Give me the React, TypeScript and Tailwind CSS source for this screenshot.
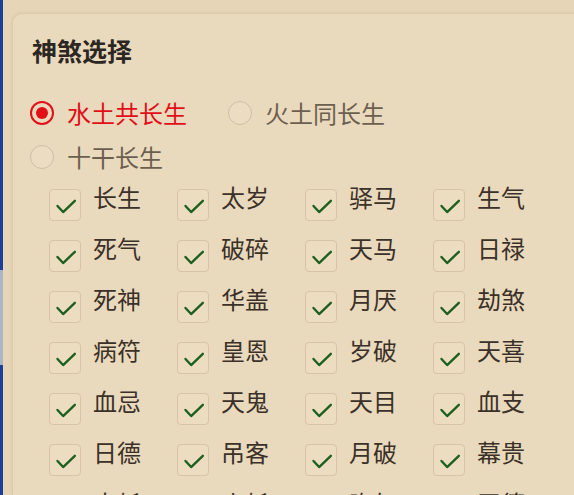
import React from "react";

const rows: string[][] = [
  ["长生", "太岁", "驿马", "生气"],
  ["死气", "破碎", "天马", "日禄"],
  ["死神", "华盖", "月厌", "劫煞"],
  ["病符", "皇恩", "岁破", "天喜"],
  ["血忌", "天鬼", "天目", "血支"],
  ["日德", "吊客", "月破", "幕贵"],
  ["大耗", "小耗", "晦气", "天德"],
];

function Check() {
  return (
    <div className="mt-[4px] flex h-[32px] w-[32px] shrink-0 items-center justify-center rounded-[4px] border border-[#d6c4a4] bg-[#ecdcc0]">
      <svg width="32" height="32" viewBox="0 0 32 32" fill="none">
        <path
          d="M8 17 L14 23.5 L26.5 11.5"
          stroke="#1c5f1f"
          strokeWidth="2.5"
          strokeLinecap="round"
          strokeLinejoin="round"
        />
      </svg>
    </div>
  );
}

function Radio({ label, checked }: { label: string; checked?: boolean }) {
  return (
    <div className="flex items-center">
      {checked ? (
        <div className="flex h-[24px] w-[24px] items-center justify-center rounded-full border-2 border-[#e10f19]">
          <div className="h-[12px] w-[12px] rounded-full bg-[#e10f19]" />
        </div>
      ) : (
        <div className="h-[24px] w-[24px] rounded-full border-[1.5px] border-[#cdbea4] bg-[#ecdcc1]" />
      )}
      <span
        className={
          "ml-[13px] text-[24px] leading-[24px] " +
          (checked ? "text-[#e10f19]" : "text-[#6d5f50]")
        }
      >
        {label}
      </span>
    </div>
  );
}

export default function App() {
  return (
    <div
      className="flex h-[495px] w-[574px] overflow-hidden bg-[#e6d5b7]"
      style={{ fontFamily: '"Noto Sans CJK SC", "Noto Sans", sans-serif' }}
    >
      <div className="flex w-[3px] shrink-0 flex-col">
        <div className="h-[270px] bg-[#1d3f95]" />
        <div className="h-[95px] bg-[#aab6c6]" />
        <div className="flex-1 bg-[#1d3f95]" />
      </div>
      <div className="ml-[9px] mt-[13px] w-[620px] shrink-0 rounded-tl-[10px] border-l border-t border-[#dccbab] bg-[#eadabd] pl-[17px] pt-[24px] shadow-[0_0_3px_rgba(120,90,50,0.12)]">
        <div className="ml-[2px] text-[25px] font-bold leading-[25px] text-[#2c2723]">神煞选择</div>
        <div className="mt-[38px] flex w-[420px] flex-wrap gap-x-[41px] gap-y-[20px]">
          <Radio label="水土共长生" checked />
          <Radio label="火土同长生" />
          <Radio label="十干长生" />
        </div>
        <div className="ml-[19px] mt-[16px] flex flex-col gap-y-[15px]">
          {rows.map((row, i) => (
            <div key={i} className="flex">
              {row.map((name) => (
                <div key={name} className="flex w-[128px] items-start">
                  <Check />
                  <span className="ml-[12px] text-[24px] leading-[24px] text-[#3b3129]">{name}</span>
                </div>
              ))}
            </div>
          ))}
        </div>
      </div>
    </div>
  );
}
